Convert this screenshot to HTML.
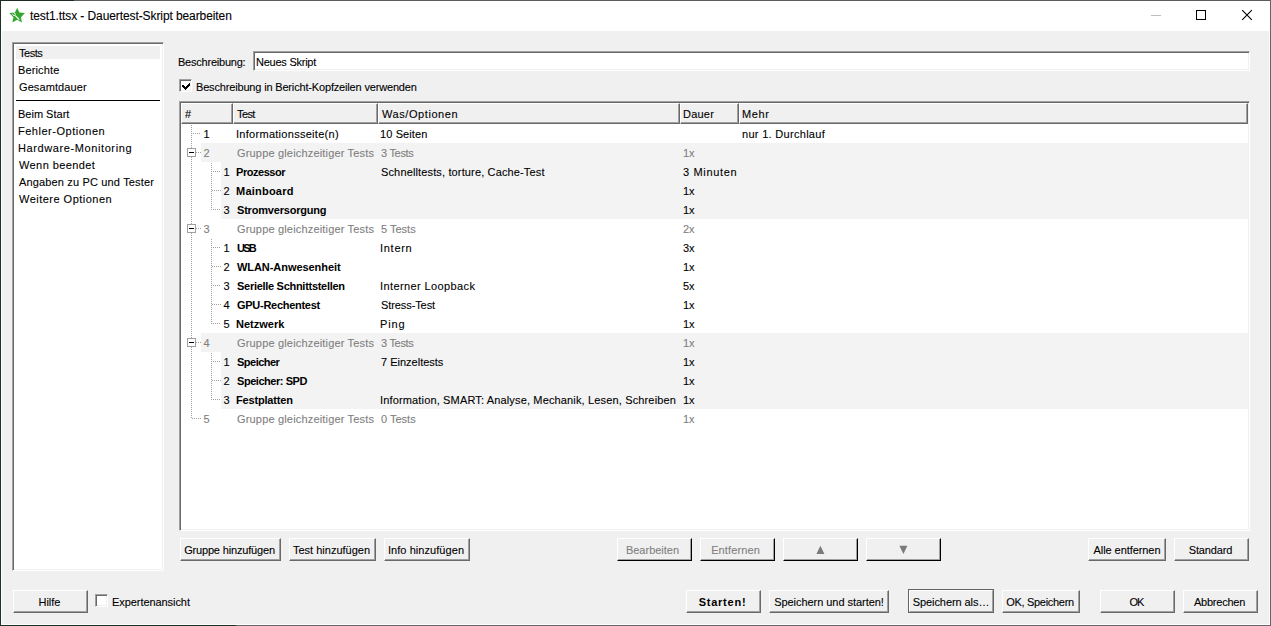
<!DOCTYPE html>
<html><head><meta charset="utf-8"><style>
html,body{margin:0;padding:0}
body{width:1271px;height:626px;position:relative;overflow:hidden;background:#f0f0f0;font-family:"Liberation Sans",sans-serif}
.t{position:absolute;font-size:11px;line-height:13px;white-space:pre;color:#000;-webkit-text-stroke:0.1px currentColor}
.b{font-weight:bold;-webkit-text-stroke:0}

.sunk{position:absolute;box-sizing:border-box;border-style:solid;border-width:1px;border-color:#a0a0a0 #fff #fff #a0a0a0;box-shadow:inset 1px 1px #696969, inset -1px -1px #f0f0f0}
.hdr{position:absolute;box-sizing:border-box;background:#f0f0f0;border-style:solid;border-width:1px;border-color:#fff #696969 #696969 #fff;box-shadow:inset -1px -1px #a0a0a0}
.btn{position:absolute;box-sizing:border-box;background:#f0f0f0;border-style:solid;border-width:1px;border-color:#fff #696969 #696969 #fff;box-shadow:inset -1px -1px #a0a0a0;display:flex;align-items:center;justify-content:center}
.noshadow{box-shadow:none}
.bt.b{-webkit-text-stroke:0}
.bt{font-size:11px;line-height:13px;white-space:pre;color:#000;position:relative;top:1px;-webkit-text-stroke:0.1px currentColor}
.g{color:#808080}
</style></head><body>
<div style="position:absolute;left:0;top:0;width:1271px;height:31px;background:#fff"></div>
<div style="position:absolute;left:0;top:0;width:1271px;height:1px;background:#5c5c5c"></div>
<div style="position:absolute;left:0;top:0;width:74px;height:1px;background:#1e2b21"></div>
<div style="position:absolute;left:0;top:0;width:1px;height:626px;background:#1f3024"></div>
<div style="position:absolute;left:1270px;top:0;width:1px;height:626px;background:#666"></div>
<div style="position:absolute;left:0;top:625px;width:1271px;height:1px;background:#666"></div>
<div style="position:absolute;left:0;top:625px;width:236px;height:1px;background:#1f3024"></div>
<div style="position:absolute;left:1px;top:31px;width:1px;height:594px;background:#fff"></div>
<div style="position:absolute;left:1269px;top:31px;width:1px;height:594px;background:#fff"></div>
<div style="position:absolute;left:1px;top:624px;width:1269px;height:1px;background:#fff"></div>
<svg style="position:absolute;left:0;top:0" width="40" height="30" viewBox="0 0 40 30">
<polygon points="17.2,7.8 19.4,12.5 24.9,13.1 21.0,17.3 21.9,22.4 17.2,19.8 12.4,22.4 13.4,17.3 9.3,13.1 14.9,12.5" fill="#34a630"/>
<path d="M15.3,15.6 L19.3,19.6" stroke="#fff" stroke-width="1.2"/>
<circle cx="14.1" cy="14.3" r="1.3" fill="none" stroke="#fff" stroke-width="0.9"/>
<path d="M13.2,13.2 L14.3,14.3" stroke="#34a630" stroke-width="1"/>
</svg>
<div class="t" style="left:30.00px;top:9px;font-size:12px;line-height:14px;letter-spacing:-0.092px">test1.ttsx - Dauertest-Skript bearbeiten</div>
<div style="position:absolute;left:1151px;top:15px;width:10px;height:1px;background:#bdbdbd"></div>
<div style="position:absolute;left:1196px;top:10px;width:10px;height:10px;box-sizing:border-box;border:1px solid #000"></div>
<svg style="position:absolute;left:1241px;top:9px" width="12" height="12" viewBox="0 0 12 12"><path d="M1.2,1.2 L10.8,10.8 M10.8,1.2 L1.2,10.8" stroke="#000" stroke-width="1.1"/></svg>
<div class="sunk" style="left:12px;top:42px;width:152px;height:529px;background:#fff;"></div>
<div style="position:absolute;left:16px;top:46px;width:144px;height:13px;background:#f0f0f0"></div>
<div style="position:absolute;left:16px;top:100px;width:144px;height:1px;background:#000"></div>
<div class="t " style="left:19.00px;top:47px;letter-spacing:-0.450px;">Tests</div>
<div class="t " style="left:18.00px;top:64px;letter-spacing:0.129px;">Berichte</div>
<div class="t " style="left:19.00px;top:81px;letter-spacing:0.090px;">Gesamtdauer</div>
<div class="t " style="left:18.00px;top:108px;">Beim Start</div>
<div class="t " style="left:18.00px;top:125px;letter-spacing:0.514px;">Fehler-Optionen</div>
<div class="t " style="left:18.00px;top:142px;letter-spacing:0.600px;">Hardware-Monitoring</div>
<div class="t " style="left:19.00px;top:159px;letter-spacing:0.409px;">Wenn beendet</div>
<div class="t " style="left:19.00px;top:176px;letter-spacing:0.157px;">Angaben zu PC und Tester</div>
<div class="t " style="left:19.00px;top:193px;letter-spacing:0.480px;">Weitere Optionen</div>
<div class="t " style="left:178.00px;top:56px;letter-spacing:-0.225px;">Beschreibung:</div>
<div class="sunk" style="left:253px;top:51px;width:997px;height:20px;background:#fff;"></div>
<div class="t " style="left:256.00px;top:56px;letter-spacing:-0.246px;">Neues Skript</div>
<div class="sunk" style="left:179px;top:79px;width:13px;height:13px;background:#fff;"></div>
<svg style="position:absolute;left:0;top:0" width="200" height="100"><rect x="182" y="85" width="1" height="2" fill="#000"/><rect x="183" y="85" width="1" height="3" fill="#000"/><rect x="184" y="86" width="1" height="3" fill="#000"/><rect x="185" y="87" width="1" height="3" fill="#000"/><rect x="186" y="86" width="1" height="3" fill="#000"/><rect x="187" y="85" width="1" height="3" fill="#000"/><rect x="188" y="84" width="1" height="3" fill="#000"/><rect x="189" y="83" width="1" height="3" fill="#000"/></svg>
<div class="t " style="left:196.00px;top:81px;letter-spacing:-0.168px;">Beschreibung in Bericht-Kopfzeilen verwenden</div>
<div class="sunk" style="left:179px;top:101px;width:1071px;height:430px;background:#fff;"></div>
<div class="hdr" style="left:181px;top:103px;width:52px;height:21px"></div>
<div class="t " style="left:185.00px;top:108px;">#</div>
<div class="hdr" style="left:233px;top:103px;width:145px;height:21px"></div>
<div class="t " style="left:237.00px;top:108px;letter-spacing:-0.600px;">Test</div>
<div class="hdr" style="left:378px;top:103px;width:302px;height:21px"></div>
<div class="t " style="left:382.00px;top:108px;letter-spacing:0.573px;">Was/Optionen</div>
<div class="hdr" style="left:680px;top:103px;width:59px;height:21px"></div>
<div class="t " style="left:683.00px;top:108px;letter-spacing:0.225px;">Dauer</div>
<div class="hdr" style="left:739px;top:103px;width:509px;height:21px"></div>
<div class="t " style="left:742.00px;top:108px;letter-spacing:0.600px;">Mehr</div>
<div class="t " style="left:203.50px;top:128px;">1</div>
<div class="t  " style="left:236.00px;top:128px;letter-spacing:0.284px;">Informationsseite(n)</div>
<div class="t " style="left:380.00px;top:128px;letter-spacing:0.113px;">10 Seiten</div>
<div class="t " style="left:742.00px;top:128px;letter-spacing:0.300px;">nur 1. Durchlauf</div>
<div style="position:absolute;left:201px;top:143px;width:1047px;height:19px;background:#f3f3f3"></div>
<div class="t g" style="left:203.50px;top:147px;">2</div>
<div class="t g " style="left:237.00px;top:147px;letter-spacing:0.173px;">Gruppe gleichzeitiger Tests</div>
<div class="t g" style="left:381.00px;top:147px;letter-spacing:-0.300px;">3 Tests</div>
<div class="t g" style="left:683.00px;top:147px;">1x</div>
<div style="position:absolute;left:221px;top:162px;width:1027px;height:19px;background:#f3f3f3"></div>
<div class="t " style="left:223.50px;top:166px;">1</div>
<div class="t  b" style="left:236.00px;top:166px;letter-spacing:-0.451px;">Prozessor</div>
<div class="t " style="left:381.00px;top:166px;letter-spacing:0.141px;">Schnelltests, torture, Cache-Test</div>
<div class="t " style="left:683.00px;top:166px;letter-spacing:0.675px;">3 Minuten</div>
<div style="position:absolute;left:221px;top:181px;width:1027px;height:19px;background:#f3f3f3"></div>
<div class="t " style="left:223.50px;top:185px;">2</div>
<div class="t  b" style="left:236.00px;top:185px;letter-spacing:0.226px;">Mainboard</div>
<div class="t " style="left:683.00px;top:185px;">1x</div>
<div style="position:absolute;left:221px;top:200px;width:1027px;height:19px;background:#f3f3f3"></div>
<div class="t " style="left:223.50px;top:204px;">3</div>
<div class="t  b" style="left:237.00px;top:204px;letter-spacing:-0.193px;">Stromversorgung</div>
<div class="t " style="left:683.00px;top:204px;">1x</div>
<div class="t g" style="left:203.50px;top:223px;">3</div>
<div class="t g " style="left:237.00px;top:223px;letter-spacing:0.173px;">Gruppe gleichzeitiger Tests</div>
<div class="t g" style="left:381.00px;top:223px;">5 Tests</div>
<div class="t g" style="left:683.00px;top:223px;">2x</div>
<div class="t " style="left:223.50px;top:242px;">1</div>
<div class="t  b" style="left:237.00px;top:242px;letter-spacing:-1.800px;">USB</div>
<div class="t " style="left:380.00px;top:242px;letter-spacing:0.720px;">Intern</div>
<div class="t " style="left:683.00px;top:242px;">3x</div>
<div class="t " style="left:223.50px;top:261px;">2</div>
<div class="t  b" style="left:237.00px;top:261px;letter-spacing:-0.060px;">WLAN-Anwesenheit</div>
<div class="t " style="left:683.00px;top:261px;">1x</div>
<div class="t " style="left:223.50px;top:280px;">3</div>
<div class="t  b" style="left:237.00px;top:280px;letter-spacing:-0.286px;">Serielle Schnittstellen</div>
<div class="t " style="left:380.00px;top:280px;letter-spacing:0.394px;">Interner Loopback</div>
<div class="t " style="left:683.00px;top:280px;">5x</div>
<div class="t " style="left:223.50px;top:299px;">4</div>
<div class="t  b" style="left:237.00px;top:299px;letter-spacing:-0.277px;">GPU-Rechentest</div>
<div class="t " style="left:381.00px;top:299px;letter-spacing:-0.090px;">Stress-Test</div>
<div class="t " style="left:683.00px;top:299px;">1x</div>
<div class="t " style="left:223.50px;top:318px;">5</div>
<div class="t  b" style="left:236.00px;top:318px;">Netzwerk</div>
<div class="t " style="left:380.00px;top:318px;letter-spacing:0.900px;">Ping</div>
<div class="t " style="left:683.00px;top:318px;">1x</div>
<div style="position:absolute;left:201px;top:333px;width:1047px;height:19px;background:#f3f3f3"></div>
<div class="t g" style="left:203.50px;top:337px;">4</div>
<div class="t g " style="left:237.00px;top:337px;letter-spacing:0.173px;">Gruppe gleichzeitiger Tests</div>
<div class="t g" style="left:381.00px;top:337px;letter-spacing:-0.300px;">3 Tests</div>
<div class="t g" style="left:683.00px;top:337px;">1x</div>
<div style="position:absolute;left:221px;top:352px;width:1027px;height:19px;background:#f3f3f3"></div>
<div class="t " style="left:223.50px;top:356px;">1</div>
<div class="t  b" style="left:237.00px;top:356px;letter-spacing:-0.514px;">Speicher</div>
<div class="t " style="left:381.00px;top:356px;">7 Einzeltests</div>
<div class="t " style="left:683.00px;top:356px;">1x</div>
<div style="position:absolute;left:221px;top:371px;width:1027px;height:19px;background:#f3f3f3"></div>
<div class="t " style="left:223.50px;top:375px;">2</div>
<div class="t  b" style="left:237.00px;top:375px;letter-spacing:-0.450px;">Speicher: SPD</div>
<div class="t " style="left:683.00px;top:375px;">1x</div>
<div style="position:absolute;left:221px;top:390px;width:1027px;height:19px;background:#f3f3f3"></div>
<div class="t " style="left:223.50px;top:394px;">3</div>
<div class="t  b" style="left:236.00px;top:394px;letter-spacing:-0.180px;">Festplatten</div>
<div class="t " style="left:380.00px;top:394px;letter-spacing:0.150px;">Information, SMART: Analyse, Mechanik, Lesen, Schreiben</div>
<div class="t " style="left:683.00px;top:394px;">1x</div>
<div class="t g" style="left:203.50px;top:413px;">5</div>
<div class="t g " style="left:237.00px;top:413px;letter-spacing:0.173px;">Gruppe gleichzeitiger Tests</div>
<div class="t g" style="left:381.00px;top:413px;">0 Tests</div>
<div class="t g" style="left:683.00px;top:413px;">1x</div>
<svg style="position:absolute;left:0;top:0" width="1271" height="626"><rect x="191" y="125" width="1" height="1" fill="#a0a0a0"/><rect x="191" y="127" width="1" height="1" fill="#a0a0a0"/><rect x="191" y="129" width="1" height="1" fill="#a0a0a0"/><rect x="191" y="131" width="1" height="1" fill="#a0a0a0"/><rect x="191" y="133" width="1" height="1" fill="#a0a0a0"/><rect x="191" y="135" width="1" height="1" fill="#a0a0a0"/><rect x="191" y="137" width="1" height="1" fill="#a0a0a0"/><rect x="191" y="139" width="1" height="1" fill="#a0a0a0"/><rect x="191" y="141" width="1" height="1" fill="#a0a0a0"/><rect x="191" y="143" width="1" height="1" fill="#a0a0a0"/><rect x="191" y="145" width="1" height="1" fill="#a0a0a0"/><rect x="191" y="147" width="1" height="1" fill="#a0a0a0"/><rect x="191" y="157" width="1" height="1" fill="#a0a0a0"/><rect x="191" y="159" width="1" height="1" fill="#a0a0a0"/><rect x="191" y="161" width="1" height="1" fill="#a0a0a0"/><rect x="191" y="163" width="1" height="1" fill="#a0a0a0"/><rect x="191" y="165" width="1" height="1" fill="#a0a0a0"/><rect x="191" y="167" width="1" height="1" fill="#a0a0a0"/><rect x="191" y="169" width="1" height="1" fill="#a0a0a0"/><rect x="191" y="171" width="1" height="1" fill="#a0a0a0"/><rect x="191" y="173" width="1" height="1" fill="#a0a0a0"/><rect x="191" y="175" width="1" height="1" fill="#a0a0a0"/><rect x="191" y="177" width="1" height="1" fill="#a0a0a0"/><rect x="191" y="179" width="1" height="1" fill="#a0a0a0"/><rect x="191" y="181" width="1" height="1" fill="#a0a0a0"/><rect x="191" y="183" width="1" height="1" fill="#a0a0a0"/><rect x="191" y="185" width="1" height="1" fill="#a0a0a0"/><rect x="191" y="187" width="1" height="1" fill="#a0a0a0"/><rect x="191" y="189" width="1" height="1" fill="#a0a0a0"/><rect x="191" y="191" width="1" height="1" fill="#a0a0a0"/><rect x="191" y="193" width="1" height="1" fill="#a0a0a0"/><rect x="191" y="195" width="1" height="1" fill="#a0a0a0"/><rect x="191" y="197" width="1" height="1" fill="#a0a0a0"/><rect x="191" y="199" width="1" height="1" fill="#a0a0a0"/><rect x="191" y="201" width="1" height="1" fill="#a0a0a0"/><rect x="191" y="203" width="1" height="1" fill="#a0a0a0"/><rect x="191" y="205" width="1" height="1" fill="#a0a0a0"/><rect x="191" y="207" width="1" height="1" fill="#a0a0a0"/><rect x="191" y="209" width="1" height="1" fill="#a0a0a0"/><rect x="191" y="211" width="1" height="1" fill="#a0a0a0"/><rect x="191" y="213" width="1" height="1" fill="#a0a0a0"/><rect x="191" y="215" width="1" height="1" fill="#a0a0a0"/><rect x="191" y="217" width="1" height="1" fill="#a0a0a0"/><rect x="191" y="219" width="1" height="1" fill="#a0a0a0"/><rect x="191" y="221" width="1" height="1" fill="#a0a0a0"/><rect x="191" y="223" width="1" height="1" fill="#a0a0a0"/><rect x="191" y="233" width="1" height="1" fill="#a0a0a0"/><rect x="191" y="235" width="1" height="1" fill="#a0a0a0"/><rect x="191" y="237" width="1" height="1" fill="#a0a0a0"/><rect x="191" y="239" width="1" height="1" fill="#a0a0a0"/><rect x="191" y="241" width="1" height="1" fill="#a0a0a0"/><rect x="191" y="243" width="1" height="1" fill="#a0a0a0"/><rect x="191" y="245" width="1" height="1" fill="#a0a0a0"/><rect x="191" y="247" width="1" height="1" fill="#a0a0a0"/><rect x="191" y="249" width="1" height="1" fill="#a0a0a0"/><rect x="191" y="251" width="1" height="1" fill="#a0a0a0"/><rect x="191" y="253" width="1" height="1" fill="#a0a0a0"/><rect x="191" y="255" width="1" height="1" fill="#a0a0a0"/><rect x="191" y="257" width="1" height="1" fill="#a0a0a0"/><rect x="191" y="259" width="1" height="1" fill="#a0a0a0"/><rect x="191" y="261" width="1" height="1" fill="#a0a0a0"/><rect x="191" y="263" width="1" height="1" fill="#a0a0a0"/><rect x="191" y="265" width="1" height="1" fill="#a0a0a0"/><rect x="191" y="267" width="1" height="1" fill="#a0a0a0"/><rect x="191" y="269" width="1" height="1" fill="#a0a0a0"/><rect x="191" y="271" width="1" height="1" fill="#a0a0a0"/><rect x="191" y="273" width="1" height="1" fill="#a0a0a0"/><rect x="191" y="275" width="1" height="1" fill="#a0a0a0"/><rect x="191" y="277" width="1" height="1" fill="#a0a0a0"/><rect x="191" y="279" width="1" height="1" fill="#a0a0a0"/><rect x="191" y="281" width="1" height="1" fill="#a0a0a0"/><rect x="191" y="283" width="1" height="1" fill="#a0a0a0"/><rect x="191" y="285" width="1" height="1" fill="#a0a0a0"/><rect x="191" y="287" width="1" height="1" fill="#a0a0a0"/><rect x="191" y="289" width="1" height="1" fill="#a0a0a0"/><rect x="191" y="291" width="1" height="1" fill="#a0a0a0"/><rect x="191" y="293" width="1" height="1" fill="#a0a0a0"/><rect x="191" y="295" width="1" height="1" fill="#a0a0a0"/><rect x="191" y="297" width="1" height="1" fill="#a0a0a0"/><rect x="191" y="299" width="1" height="1" fill="#a0a0a0"/><rect x="191" y="301" width="1" height="1" fill="#a0a0a0"/><rect x="191" y="303" width="1" height="1" fill="#a0a0a0"/><rect x="191" y="305" width="1" height="1" fill="#a0a0a0"/><rect x="191" y="307" width="1" height="1" fill="#a0a0a0"/><rect x="191" y="309" width="1" height="1" fill="#a0a0a0"/><rect x="191" y="311" width="1" height="1" fill="#a0a0a0"/><rect x="191" y="313" width="1" height="1" fill="#a0a0a0"/><rect x="191" y="315" width="1" height="1" fill="#a0a0a0"/><rect x="191" y="317" width="1" height="1" fill="#a0a0a0"/><rect x="191" y="319" width="1" height="1" fill="#a0a0a0"/><rect x="191" y="321" width="1" height="1" fill="#a0a0a0"/><rect x="191" y="323" width="1" height="1" fill="#a0a0a0"/><rect x="191" y="325" width="1" height="1" fill="#a0a0a0"/><rect x="191" y="327" width="1" height="1" fill="#a0a0a0"/><rect x="191" y="329" width="1" height="1" fill="#a0a0a0"/><rect x="191" y="331" width="1" height="1" fill="#a0a0a0"/><rect x="191" y="333" width="1" height="1" fill="#a0a0a0"/><rect x="191" y="335" width="1" height="1" fill="#a0a0a0"/><rect x="191" y="337" width="1" height="1" fill="#a0a0a0"/><rect x="191" y="347" width="1" height="1" fill="#a0a0a0"/><rect x="191" y="349" width="1" height="1" fill="#a0a0a0"/><rect x="191" y="351" width="1" height="1" fill="#a0a0a0"/><rect x="191" y="353" width="1" height="1" fill="#a0a0a0"/><rect x="191" y="355" width="1" height="1" fill="#a0a0a0"/><rect x="191" y="357" width="1" height="1" fill="#a0a0a0"/><rect x="191" y="359" width="1" height="1" fill="#a0a0a0"/><rect x="191" y="361" width="1" height="1" fill="#a0a0a0"/><rect x="191" y="363" width="1" height="1" fill="#a0a0a0"/><rect x="191" y="365" width="1" height="1" fill="#a0a0a0"/><rect x="191" y="367" width="1" height="1" fill="#a0a0a0"/><rect x="191" y="369" width="1" height="1" fill="#a0a0a0"/><rect x="191" y="371" width="1" height="1" fill="#a0a0a0"/><rect x="191" y="373" width="1" height="1" fill="#a0a0a0"/><rect x="191" y="375" width="1" height="1" fill="#a0a0a0"/><rect x="191" y="377" width="1" height="1" fill="#a0a0a0"/><rect x="191" y="379" width="1" height="1" fill="#a0a0a0"/><rect x="191" y="381" width="1" height="1" fill="#a0a0a0"/><rect x="191" y="383" width="1" height="1" fill="#a0a0a0"/><rect x="191" y="385" width="1" height="1" fill="#a0a0a0"/><rect x="191" y="387" width="1" height="1" fill="#a0a0a0"/><rect x="191" y="389" width="1" height="1" fill="#a0a0a0"/><rect x="191" y="391" width="1" height="1" fill="#a0a0a0"/><rect x="191" y="393" width="1" height="1" fill="#a0a0a0"/><rect x="191" y="395" width="1" height="1" fill="#a0a0a0"/><rect x="191" y="397" width="1" height="1" fill="#a0a0a0"/><rect x="191" y="399" width="1" height="1" fill="#a0a0a0"/><rect x="191" y="401" width="1" height="1" fill="#a0a0a0"/><rect x="191" y="403" width="1" height="1" fill="#a0a0a0"/><rect x="191" y="405" width="1" height="1" fill="#a0a0a0"/><rect x="191" y="407" width="1" height="1" fill="#a0a0a0"/><rect x="191" y="409" width="1" height="1" fill="#a0a0a0"/><rect x="191" y="411" width="1" height="1" fill="#a0a0a0"/><rect x="191" y="413" width="1" height="1" fill="#a0a0a0"/><rect x="191" y="415" width="1" height="1" fill="#a0a0a0"/><rect x="191" y="417" width="1" height="1" fill="#a0a0a0"/><rect x="193" y="133" width="1" height="1" fill="#a0a0a0"/><rect x="195" y="133" width="1" height="1" fill="#a0a0a0"/><rect x="197" y="133" width="1" height="1" fill="#a0a0a0"/><rect x="199" y="133" width="1" height="1" fill="#a0a0a0"/><rect x="192" y="418" width="1" height="1" fill="#a0a0a0"/><rect x="194" y="418" width="1" height="1" fill="#a0a0a0"/><rect x="196" y="418" width="1" height="1" fill="#a0a0a0"/><rect x="198" y="418" width="1" height="1" fill="#a0a0a0"/><rect x="200" y="418" width="1" height="1" fill="#a0a0a0"/><rect x="196" y="152" width="1" height="1" fill="#a0a0a0"/><rect x="198" y="152" width="1" height="1" fill="#a0a0a0"/><rect x="200" y="152" width="1" height="1" fill="#a0a0a0"/><rect x="211" y="163" width="1" height="1" fill="#a0a0a0"/><rect x="211" y="165" width="1" height="1" fill="#a0a0a0"/><rect x="211" y="167" width="1" height="1" fill="#a0a0a0"/><rect x="211" y="169" width="1" height="1" fill="#a0a0a0"/><rect x="211" y="171" width="1" height="1" fill="#a0a0a0"/><rect x="211" y="173" width="1" height="1" fill="#a0a0a0"/><rect x="211" y="175" width="1" height="1" fill="#a0a0a0"/><rect x="211" y="177" width="1" height="1" fill="#a0a0a0"/><rect x="211" y="179" width="1" height="1" fill="#a0a0a0"/><rect x="211" y="181" width="1" height="1" fill="#a0a0a0"/><rect x="211" y="183" width="1" height="1" fill="#a0a0a0"/><rect x="211" y="185" width="1" height="1" fill="#a0a0a0"/><rect x="211" y="187" width="1" height="1" fill="#a0a0a0"/><rect x="211" y="189" width="1" height="1" fill="#a0a0a0"/><rect x="211" y="191" width="1" height="1" fill="#a0a0a0"/><rect x="211" y="193" width="1" height="1" fill="#a0a0a0"/><rect x="211" y="195" width="1" height="1" fill="#a0a0a0"/><rect x="211" y="197" width="1" height="1" fill="#a0a0a0"/><rect x="211" y="199" width="1" height="1" fill="#a0a0a0"/><rect x="211" y="201" width="1" height="1" fill="#a0a0a0"/><rect x="211" y="203" width="1" height="1" fill="#a0a0a0"/><rect x="211" y="205" width="1" height="1" fill="#a0a0a0"/><rect x="211" y="207" width="1" height="1" fill="#a0a0a0"/><rect x="211" y="209" width="1" height="1" fill="#a0a0a0"/><rect x="213" y="171" width="1" height="1" fill="#a0a0a0"/><rect x="215" y="171" width="1" height="1" fill="#a0a0a0"/><rect x="217" y="171" width="1" height="1" fill="#a0a0a0"/><rect x="219" y="171" width="1" height="1" fill="#a0a0a0"/><rect x="212" y="190" width="1" height="1" fill="#a0a0a0"/><rect x="214" y="190" width="1" height="1" fill="#a0a0a0"/><rect x="216" y="190" width="1" height="1" fill="#a0a0a0"/><rect x="218" y="190" width="1" height="1" fill="#a0a0a0"/><rect x="220" y="190" width="1" height="1" fill="#a0a0a0"/><rect x="213" y="209" width="1" height="1" fill="#a0a0a0"/><rect x="215" y="209" width="1" height="1" fill="#a0a0a0"/><rect x="217" y="209" width="1" height="1" fill="#a0a0a0"/><rect x="219" y="209" width="1" height="1" fill="#a0a0a0"/><rect x="196" y="228" width="1" height="1" fill="#a0a0a0"/><rect x="198" y="228" width="1" height="1" fill="#a0a0a0"/><rect x="200" y="228" width="1" height="1" fill="#a0a0a0"/><rect x="211" y="239" width="1" height="1" fill="#a0a0a0"/><rect x="211" y="241" width="1" height="1" fill="#a0a0a0"/><rect x="211" y="243" width="1" height="1" fill="#a0a0a0"/><rect x="211" y="245" width="1" height="1" fill="#a0a0a0"/><rect x="211" y="247" width="1" height="1" fill="#a0a0a0"/><rect x="211" y="249" width="1" height="1" fill="#a0a0a0"/><rect x="211" y="251" width="1" height="1" fill="#a0a0a0"/><rect x="211" y="253" width="1" height="1" fill="#a0a0a0"/><rect x="211" y="255" width="1" height="1" fill="#a0a0a0"/><rect x="211" y="257" width="1" height="1" fill="#a0a0a0"/><rect x="211" y="259" width="1" height="1" fill="#a0a0a0"/><rect x="211" y="261" width="1" height="1" fill="#a0a0a0"/><rect x="211" y="263" width="1" height="1" fill="#a0a0a0"/><rect x="211" y="265" width="1" height="1" fill="#a0a0a0"/><rect x="211" y="267" width="1" height="1" fill="#a0a0a0"/><rect x="211" y="269" width="1" height="1" fill="#a0a0a0"/><rect x="211" y="271" width="1" height="1" fill="#a0a0a0"/><rect x="211" y="273" width="1" height="1" fill="#a0a0a0"/><rect x="211" y="275" width="1" height="1" fill="#a0a0a0"/><rect x="211" y="277" width="1" height="1" fill="#a0a0a0"/><rect x="211" y="279" width="1" height="1" fill="#a0a0a0"/><rect x="211" y="281" width="1" height="1" fill="#a0a0a0"/><rect x="211" y="283" width="1" height="1" fill="#a0a0a0"/><rect x="211" y="285" width="1" height="1" fill="#a0a0a0"/><rect x="211" y="287" width="1" height="1" fill="#a0a0a0"/><rect x="211" y="289" width="1" height="1" fill="#a0a0a0"/><rect x="211" y="291" width="1" height="1" fill="#a0a0a0"/><rect x="211" y="293" width="1" height="1" fill="#a0a0a0"/><rect x="211" y="295" width="1" height="1" fill="#a0a0a0"/><rect x="211" y="297" width="1" height="1" fill="#a0a0a0"/><rect x="211" y="299" width="1" height="1" fill="#a0a0a0"/><rect x="211" y="301" width="1" height="1" fill="#a0a0a0"/><rect x="211" y="303" width="1" height="1" fill="#a0a0a0"/><rect x="211" y="305" width="1" height="1" fill="#a0a0a0"/><rect x="211" y="307" width="1" height="1" fill="#a0a0a0"/><rect x="211" y="309" width="1" height="1" fill="#a0a0a0"/><rect x="211" y="311" width="1" height="1" fill="#a0a0a0"/><rect x="211" y="313" width="1" height="1" fill="#a0a0a0"/><rect x="211" y="315" width="1" height="1" fill="#a0a0a0"/><rect x="211" y="317" width="1" height="1" fill="#a0a0a0"/><rect x="211" y="319" width="1" height="1" fill="#a0a0a0"/><rect x="211" y="321" width="1" height="1" fill="#a0a0a0"/><rect x="211" y="323" width="1" height="1" fill="#a0a0a0"/><rect x="213" y="247" width="1" height="1" fill="#a0a0a0"/><rect x="215" y="247" width="1" height="1" fill="#a0a0a0"/><rect x="217" y="247" width="1" height="1" fill="#a0a0a0"/><rect x="219" y="247" width="1" height="1" fill="#a0a0a0"/><rect x="212" y="266" width="1" height="1" fill="#a0a0a0"/><rect x="214" y="266" width="1" height="1" fill="#a0a0a0"/><rect x="216" y="266" width="1" height="1" fill="#a0a0a0"/><rect x="218" y="266" width="1" height="1" fill="#a0a0a0"/><rect x="220" y="266" width="1" height="1" fill="#a0a0a0"/><rect x="213" y="285" width="1" height="1" fill="#a0a0a0"/><rect x="215" y="285" width="1" height="1" fill="#a0a0a0"/><rect x="217" y="285" width="1" height="1" fill="#a0a0a0"/><rect x="219" y="285" width="1" height="1" fill="#a0a0a0"/><rect x="212" y="304" width="1" height="1" fill="#a0a0a0"/><rect x="214" y="304" width="1" height="1" fill="#a0a0a0"/><rect x="216" y="304" width="1" height="1" fill="#a0a0a0"/><rect x="218" y="304" width="1" height="1" fill="#a0a0a0"/><rect x="220" y="304" width="1" height="1" fill="#a0a0a0"/><rect x="213" y="323" width="1" height="1" fill="#a0a0a0"/><rect x="215" y="323" width="1" height="1" fill="#a0a0a0"/><rect x="217" y="323" width="1" height="1" fill="#a0a0a0"/><rect x="219" y="323" width="1" height="1" fill="#a0a0a0"/><rect x="196" y="342" width="1" height="1" fill="#a0a0a0"/><rect x="198" y="342" width="1" height="1" fill="#a0a0a0"/><rect x="200" y="342" width="1" height="1" fill="#a0a0a0"/><rect x="211" y="353" width="1" height="1" fill="#a0a0a0"/><rect x="211" y="355" width="1" height="1" fill="#a0a0a0"/><rect x="211" y="357" width="1" height="1" fill="#a0a0a0"/><rect x="211" y="359" width="1" height="1" fill="#a0a0a0"/><rect x="211" y="361" width="1" height="1" fill="#a0a0a0"/><rect x="211" y="363" width="1" height="1" fill="#a0a0a0"/><rect x="211" y="365" width="1" height="1" fill="#a0a0a0"/><rect x="211" y="367" width="1" height="1" fill="#a0a0a0"/><rect x="211" y="369" width="1" height="1" fill="#a0a0a0"/><rect x="211" y="371" width="1" height="1" fill="#a0a0a0"/><rect x="211" y="373" width="1" height="1" fill="#a0a0a0"/><rect x="211" y="375" width="1" height="1" fill="#a0a0a0"/><rect x="211" y="377" width="1" height="1" fill="#a0a0a0"/><rect x="211" y="379" width="1" height="1" fill="#a0a0a0"/><rect x="211" y="381" width="1" height="1" fill="#a0a0a0"/><rect x="211" y="383" width="1" height="1" fill="#a0a0a0"/><rect x="211" y="385" width="1" height="1" fill="#a0a0a0"/><rect x="211" y="387" width="1" height="1" fill="#a0a0a0"/><rect x="211" y="389" width="1" height="1" fill="#a0a0a0"/><rect x="211" y="391" width="1" height="1" fill="#a0a0a0"/><rect x="211" y="393" width="1" height="1" fill="#a0a0a0"/><rect x="211" y="395" width="1" height="1" fill="#a0a0a0"/><rect x="211" y="397" width="1" height="1" fill="#a0a0a0"/><rect x="211" y="399" width="1" height="1" fill="#a0a0a0"/><rect x="213" y="361" width="1" height="1" fill="#a0a0a0"/><rect x="215" y="361" width="1" height="1" fill="#a0a0a0"/><rect x="217" y="361" width="1" height="1" fill="#a0a0a0"/><rect x="219" y="361" width="1" height="1" fill="#a0a0a0"/><rect x="212" y="380" width="1" height="1" fill="#a0a0a0"/><rect x="214" y="380" width="1" height="1" fill="#a0a0a0"/><rect x="216" y="380" width="1" height="1" fill="#a0a0a0"/><rect x="218" y="380" width="1" height="1" fill="#a0a0a0"/><rect x="220" y="380" width="1" height="1" fill="#a0a0a0"/><rect x="213" y="399" width="1" height="1" fill="#a0a0a0"/><rect x="215" y="399" width="1" height="1" fill="#a0a0a0"/><rect x="217" y="399" width="1" height="1" fill="#a0a0a0"/><rect x="219" y="399" width="1" height="1" fill="#a0a0a0"/><rect x="187.5" y="148.5" width="8" height="8" fill="#fff" stroke="#a0a0a0" stroke-width="1"/><rect x="189" y="152" width="5" height="1" fill="#000"/><rect x="187.5" y="224.5" width="8" height="8" fill="#fff" stroke="#a0a0a0" stroke-width="1"/><rect x="189" y="228" width="5" height="1" fill="#000"/><rect x="187.5" y="338.5" width="8" height="8" fill="#fff" stroke="#a0a0a0" stroke-width="1"/><rect x="189" y="342" width="5" height="1" fill="#000"/></svg>
<div class="btn " style="left:180px;top:538px;width:101px;height:23px;border-right-color:#696969;border-bottom-color:#696969"><span class="bt " style="left:-1.00px;letter-spacing:-0.169px;">Gruppe hinzufügen</span></div>
<div class="btn " style="left:289px;top:538px;width:87px;height:23px;border-right-color:#696969;border-bottom-color:#696969"><span class="bt " style="left:-1.00px;">Test hinzufügen</span></div>
<div class="btn " style="left:384px;top:538px;width:86px;height:23px;border-right-color:#696969;border-bottom-color:#696969"><span class="bt " style="left:-1.00px;letter-spacing:0.064px;">Info hinzufügen</span></div>
<div class="btn " style="left:617px;top:538px;width:75px;height:23px;border-right-color:#000;border-bottom-color:#000"><span class="bt g" style="left:-2.00px;">Bearbeiten</span></div>
<div class="btn " style="left:700px;top:538px;width:75px;height:23px;border-right-color:#000;border-bottom-color:#000"><span class="bt g" style="left:-2.00px;letter-spacing:0.113px;">Entfernen</span></div>
<div class="btn " style="left:783px;top:538px;width:75px;height:23px;border-right-color:#000;border-bottom-color:#000"><span class="bt " style="left:0.00px;"></span></div>
<div class="btn " style="left:866px;top:538px;width:75px;height:23px;border-right-color:#000;border-bottom-color:#000"><span class="bt " style="left:0.00px;"></span></div>
<svg style="position:absolute;left:0;top:0" width="1271" height="626"><polygon points="816.4,554 824.4,554 820.4,545.8" fill="#7a7a7a"/><polygon points="899.4,545.8 907.4,545.8 903.4,554" fill="#7a7a7a"/></svg>
<div class="btn " style="left:1088px;top:538px;width:78px;height:23px;border-right-color:#696969;border-bottom-color:#696969"><span class="bt " style="left:0.00px;letter-spacing:-0.069px;">Alle entfernen</span></div>
<div class="btn " style="left:1174px;top:538px;width:75px;height:23px;border-right-color:#696969;border-bottom-color:#696969"><span class="bt " style="left:-1.00px;letter-spacing:-0.129px;">Standard</span></div>
<div class="btn " style="left:13px;top:590px;width:75px;height:23px;border-right-color:#696969;border-bottom-color:#696969"><span class="bt " style="left:-1.00px;">Hilfe</span></div>
<div class="sunk" style="left:95px;top:594px;width:13px;height:13px;background:#fff;"></div>
<div class="t " style="left:112.00px;top:596px;letter-spacing:-0.064px;">Expertenansicht</div>
<div class="btn " style="left:686px;top:590px;width:75px;height:23px;border-right-color:#696969;border-bottom-color:#696969"><span class="bt b" style="left:-1.00px;letter-spacing:0.772px;">Starten!</span></div>
<div class="btn " style="left:769px;top:590px;width:120px;height:23px;border-right-color:#696969;border-bottom-color:#696969"><span class="bt " style="left:0.00px;letter-spacing:-0.043px;">Speichern und starten!</span></div>
<div style="position:absolute;left:908px;top:589px;width:86px;height:24px;box-sizing:border-box;border:1px solid #646464"></div>
<div class="btn noshadow" style="left:909px;top:590px;width:84px;height:22px;border-right-color:#a0a0a0;border-bottom-color:#a0a0a0"><span class="bt " style="left:0.00px;letter-spacing:-0.069px;">Speichern als…</span></div>
<div class="btn " style="left:1002px;top:590px;width:78px;height:23px;border-right-color:#696969;border-bottom-color:#696969"><span class="bt " style="left:-1.00px;letter-spacing:-0.300px;">OK, Speichern</span></div>
<div class="btn " style="left:1100px;top:590px;width:75px;height:23px;border-right-color:#696969;border-bottom-color:#696969"><span class="bt " style="left:-1.00px;letter-spacing:-0.900px;">OK</span></div>
<div class="btn " style="left:1183px;top:590px;width:75px;height:23px;border-right-color:#696969;border-bottom-color:#696969"><span class="bt " style="left:-1.00px;letter-spacing:-0.225px;">Abbrechen</span></div>
</body></html>
